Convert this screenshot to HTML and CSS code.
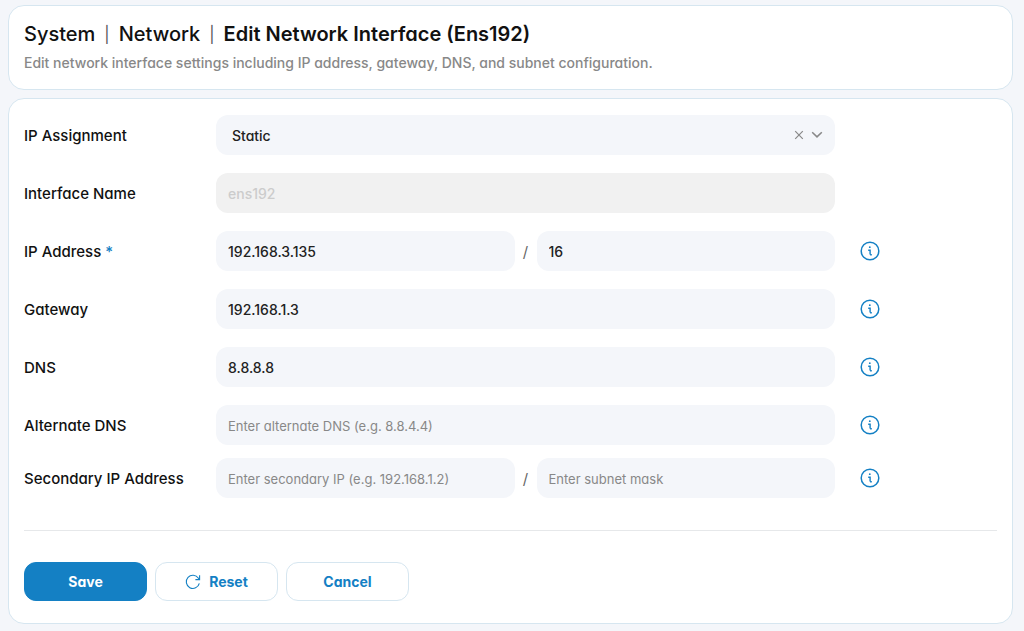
FILE: index.html
```
<!DOCTYPE html>
<html lang="en">
  <head>
    <meta charset="utf-8">
    <meta name="viewport" content="width=device-width, initial-scale=1">
    <title>Edit Network Interface (Ens192)</title>
    <link rel="stylesheet" href="styles.css">
  </head>

  <body>
    <svg class="defs" aria-hidden="true">
      <symbol id="icon-info" viewBox="0 0 20 20">
        <circle cx="10" cy="10" r="8.8" fill="none" stroke="currentColor" stroke-width="1.5"/>
        <circle cx="9.8" cy="6.2" r="0.9" fill="currentColor"/>
        <path d="M8.2 9.2h1.9v4.2M10.1 13.7h1.7" fill="none" stroke="currentColor" stroke-width="1.4"/>
      </symbol>
    </svg>

    <header class="card page-header">
      <h1><a href="#system">System</a><span class="sep">|</span><a href="#network">Network</a><span class="sep">|</span><strong>Edit Network Interface (Ens192)</strong></h1>
      <p>Edit network interface settings including IP address, gateway, DNS, and subnet configuration.</p>
    </header>

    <main class="card">
      <form>
        <div class="rows">
          <div class="row">
            <label for="assignment">IP Assignment</label>
            <div class="select">
              <select id="assignment">
                <option selected>Static</option>
                <option>DHCP</option>
              </select>
              <button type="button" class="clear" aria-label="Clear">
                <svg width="10" height="10" viewBox="0 0 10 10"><path d="M1.2 1.2l7.6 7.6M8.8 1.2L1.2 8.8" fill="none" stroke="currentColor" stroke-width="1.2"/></svg>
              </button>
              <svg class="arrow" width="12" height="8" viewBox="0 0 12 8"><path d="M1.2 1.2L6 5.9l4.8-4.7" fill="none" stroke="currentColor" stroke-width="1.5"/></svg>
            </div>
          </div>

          <div class="row">
            <label for="name">Interface Name</label>
            <input type="text" id="name" value="ens192" disabled>
          </div>

          <div class="row">
            <label for="ip">IP Address <span class="required">*</span></label>
            <div class="pair">
              <input type="text" id="ip" value="192.168.3.135">
              <span>/</span>
              <input type="text" value="16" aria-label="Subnet mask">
            </div>
            <button type="button" class="info" aria-label="Help"><svg width="20" height="20"><use href="#icon-info"/></svg></button>
          </div>

          <div class="row">
            <label for="gateway">Gateway</label>
            <input type="text" id="gateway" value="192.168.1.3">
            <button type="button" class="info" aria-label="Help"><svg width="20" height="20"><use href="#icon-info"/></svg></button>
          </div>

          <div class="row">
            <label for="dns">DNS</label>
            <input type="text" id="dns" value="8.8.8.8">
            <button type="button" class="info" aria-label="Help"><svg width="20" height="20"><use href="#icon-info"/></svg></button>
          </div>

          <div class="row-group">
            <div class="row">
              <label for="dns2">Alternate DNS</label>
              <input type="text" id="dns2" placeholder="Enter alternate DNS (e.g. 8.8.4.4)">
              <button type="button" class="info" aria-label="Help"><svg width="20" height="20"><use href="#icon-info"/></svg></button>
            </div>

            <div class="row">
              <label for="ip2">Secondary IP Address</label>
              <div class="pair">
                <input type="text" id="ip2" placeholder="Enter secondary IP (e.g. 192.168.1.2)">
                <span>/</span>
                <input type="text" placeholder="Enter subnet mask" aria-label="Secondary subnet mask">
              </div>
              <button type="button" class="info" aria-label="Help"><svg width="20" height="20"><use href="#icon-info"/></svg></button>
            </div>
          </div>
        </div>

        <hr>

        <div class="actions">
          <button type="submit" class="btn primary">Save</button>
          <button type="reset" class="btn">
            <svg width="16" height="16" viewBox="0 0 16 16"><path d="M14.3 9.4A6.6 6.6 0 1 1 13.4 4.2L14.6 5.6M14.6 1.2V5.6H10.4" fill="none" stroke="currentColor" stroke-width="1.1"/></svg>
            Reset
          </button>
          <button type="button" class="btn">Cancel</button>
        </div>
      </form>
    </main>
  </body>
</html>
```

FILE: styles.css
```
* {
  box-sizing: border-box;
}
body {
  margin: 0;
  padding: 5px 11px 7px 8px;
  background: #f4f6fa;
  color: #111;
  font-family: Inter, "Liberation Sans", sans-serif;
  font-feature-settings: "cv11";
  font-size: 15px;
}
input, select, button {
  font: inherit;
  font-feature-settings: inherit;
  color: inherit;
}
.defs {
  position: absolute;
  width: 0;
  height: 0;
}
.card {
  padding: 16px 15px;
  background: #fff;
  border: 1px solid #d6e6f0;
  border-radius: 16px;
}
.page-header {
  padding: 14px 15px 15px;
  margin-bottom: 8px;
}

h1 {
  display: flex;
  gap: 9px;
  margin: 0;
  font-size: 20px;
  line-height: 28px;
  font-weight: 500;
}
h1 a {
  color: inherit;
  text-decoration: none;
}
h1 strong {
  font-weight: 600;
}
.sep {
  font-size: 16px;
  font-weight: 400;
  color: #555;
}
.page-header p {
  margin: 4px 0 0;
  font-size: 14px;
  line-height: 22px;
  font-weight: 500;
  color: #888;
}

.rows {
  display: grid;
  gap: 18px;
}
.row-group {
  display: grid;
  gap: 13px;
}
.row {
  display: grid;
  grid-template-columns: 192px 1fr 162px;
  align-items: center;
}
.row label {
  font-weight: 500;
}
.required {
  color: #1480c4;
}
input, select {
  width: 100%;
  min-width: 0;
  height: 40px;
  padding: 0 12px;
  border: 0;
  border-radius: 12px;
  background: #f4f6fa;
  color: #222;
  font-size: 14px;
  font-weight: 500;
}
input:disabled {
  background: #f1f1f1;
  color: #ccc;
}
input::placeholder {
  font-size: 13px;
  font-weight: 400;
  color: #888;
}
.select {
  position: relative;
}
.select select {
  appearance: none;
  padding-left: 16px;
}
.clear, .arrow {
  position: absolute;
  top: 16px;
  right: 12px;
  color: #888;
}
.clear {
  top: 15px;
  right: 31px;
}
.pair {
  display: flex;
  align-items: center;
}
.pair span {
  flex: none;
  width: 22px;
  text-align: center;
  color: #666;
}
.info, .clear {
  display: flex;
  padding: 0;
  border: 0;
  background: none;
}
.info {
  margin-left: 25px;
  color: #1480c4;
}

hr {
  margin: 32px 0 31px;
  border: 0;
  border-top: 1px solid #e6e8ea;
}
.actions {
  display: flex;
  gap: 8px;
  padding-bottom: 6px;
}
.btn {
  display: flex;
  align-items: center;
  justify-content: center;
  gap: 8px;
  width: 123px;
  height: 39px;
  border: 1px solid #d6e6f0;
  border-radius: 12px;
  background: #fff;
  color: #1480c4;
  font-size: 14px;
  font-weight: 700;
}
.primary {
  background: #1480c4;
  border-color: #1480c4;
  color: #fff;
}
```
